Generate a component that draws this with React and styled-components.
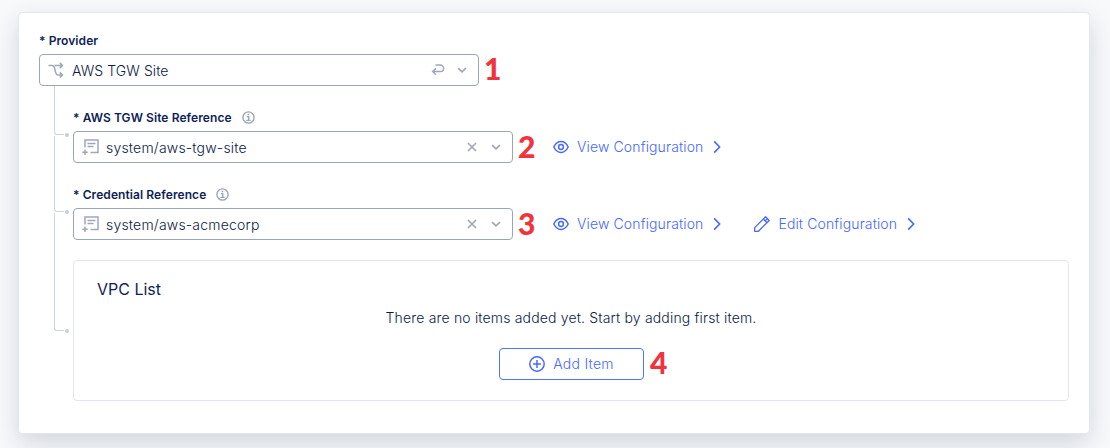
import React from "react";
import styled, { createGlobalStyle } from "styled-components";

const Global = createGlobalStyle`
  *, *::before, *::after { box-sizing: border-box; }
  body {
    margin: 0;
    background: #f8f9fb;
    font-family: Inter, "Liberation Sans", sans-serif;
    color: #0f1e57;
  }
  svg { display: block; flex: none; }
`;

const Page = styled.div`
  height: 448px;
  padding: 12px 20px 0 18px;
  overflow: hidden;
`;

const Card = styled.main`
  width: 1072px;
  height: 422px;
  padding: 19px 20px 20px;
  background: #fff;
  border: 1px solid #e4e7f2;
  border-radius: 4px;
  box-shadow: 0 9px 24px rgba(15, 30, 70, 0.16);
`;

const Label = styled.div`
  display: flex;
  align-items: center;
  gap: 10px;
  height: 16px;
  font-size: 12px;
  font-weight: 600;
  letter-spacing: 0.08px;
  white-space: nowrap;
`;

const FieldLine = styled.div`
  display: flex;
  align-items: center;
  height: 32px;
  margin-top: 6px;
`;

const SelectBox = styled.div`
  display: flex;
  align-items: center;
  flex: none;
  width: 440px;
  height: 32px;
  padding: 0 10px 0 8px;
  border: 1px solid #9ca5b8;
  border-radius: 4px;
  color: #a0a7ba;
`;

const SelectValue = styled.span`
  flex: 1;
  margin-left: ${(p) => p.$gap};
  padding-top: 2px;
  font-size: 14px;
  font-weight: 350;
  line-height: 20px;
  letter-spacing: ${(p) => p.$spacing || "0"};
  color: #0c1a47;
`;

const SelectTools = styled.span`
  display: flex;
  align-items: center;
  gap: ${(p) => p.$gap || "12px"};
`;

const StepNumber = styled.span`
  flex: none;
  width: 17px;
  margin: 0 ${(p) => p.$shift ? `-${p.$shift}` : "0"} ${(p) => p.$lift || "2px"} calc(5px + ${(p) => p.$shift || "0px"});
  font: 900 30px/32px Lato, "Open Sans", sans-serif;
  color: #f2323c;
`;

const Action = styled.a`
  display: flex;
  align-items: center;
  margin-left: ${(p) => p.$offset};
  font-size: 14px;
  font-weight: 350;
  line-height: 20px;
  letter-spacing: 0.13px;
  color: #4768ff;
  white-space: nowrap;
  span { margin: 0 8px; }
`;

const TreeRow = styled.div`
  display: grid;
  grid-template-columns: 34px 1fr;
  height: ${(p) => p.$height};
`;

const Branch = styled.div`
  display: flex;
  flex-direction: column;
  padding-left: 15px;
`;

const Elbow = styled.div`
  display: flex;
  align-items: flex-end;
  height: ${(p) => p.$height};
  &::before {
    content: "";
    width: 10px;
    height: 100%;
    border: solid #cdd3e2;
    border-width: 0 0 1px 1px;
    border-bottom-left-radius: 3px;
  }
  &::after {
    content: "";
    width: 4px;
    height: 4px;
    margin: 0 0 -2px 1px;
    border-radius: 50%;
    background: #c6cddd;
  }
`;

const Stem = styled.div`
  flex: 1;
  width: 1px;
  margin-top: 1px;
  background: #cdd3e2;
`;

const Field = styled.div`
  padding-top: 23px;
`;

const ListPanel = styled.section`
  display: flex;
  flex-direction: column;
  height: 141px;
  margin-top: 20px;
  border: 1px solid #e4e4f1;
  border-radius: 4px;
`;

const PanelTitle = styled.h2`
  margin: 16px 0 0 23px;
  font-size: 16px;
  font-weight: 400;
  line-height: 24px;
`;

const EmptyText = styled.p`
  margin: 7px 0 0;
  font-size: 14px;
  font-weight: 350;
  line-height: 20px;
  letter-spacing: 0.17px;
  text-align: center;
  color: #0c1a47;
`;

const AddLine = styled.div`
  display: flex;
  align-items: center;
  height: 32px;
  margin: 20px 0 0 425px;
`;

const AddButton = styled.button`
  display: flex;
  align-items: center;
  justify-content: center;
  gap: 8px;
  width: 145px;
  height: 32px;
  padding: 0;
  border: 1px solid #4f73ff;
  border-radius: 4px;
  background: #fff;
  font: 350 14px/20px Inter, sans-serif;
  letter-spacing: 0.25px;
  color: #4768ff;
`;

const stroke = { fill: "none", stroke: "currentColor", strokeWidth: 1.5 };

const BranchIcon = () => (
  <svg width="16" height="16" viewBox="0 0 16 16" {...stroke}>
    <path d="M.5 3.500h3.500C8.500 3.500 5.900 13 10 13h4.200M6.500 3.500h7.700M11.800.9l2.600 2.600-2.600 2.600M11.800 10.400l2.600 2.600-2.600 2.600" />
  </svg>
);

const ReferenceIcon = () => (
  <svg width="18" height="18" viewBox="0 0 18 18" {...stroke}>
    <path d="M3 9.500V2h13v12.500H8.500M5.500 5.500h8M5.500 8.500h6M3 11.500v5.500M.3 14.300h5.400" />
  </svg>
);

const InfoIcon = () => (
  <svg width="13" height="13" viewBox="0 0 13 13" fill="none" stroke="#9da5b8" strokeWidth="1.4">
    <circle cx="6.5" cy="6.5" r="5.600" />
    <path d="M4.800 5.600h1.900v3.700M4.400 9.400h4.200M5.600 3.500h1.700" />
  </svg>
);

const ReturnIcon = () => (
  <svg width="14" height="12" viewBox="0 0 14 12" {...stroke}>
    <path d="M4.500 1H9.300a3.300 3.300 0 0 1 0 6.600H2M4.900 4.400l-3.200 3.200 3.200 3.200" />
  </svg>
);

const ChevronDown = () => (
  <svg width="12" height="12" viewBox="0 0 12 12" {...stroke} strokeWidth="1.7">
    <path d="M2.100 4.100 6 7.900l3.900-3.800" />
  </svg>
);

const ClearIcon = () => (
  <svg width="12" height="12" viewBox="0 0 12 12" {...stroke} strokeWidth="1.7">
    <path d="m2 2 8 8M10 2l-8 8" />
  </svg>
);

const EyeIcon = () => (
  <svg width="16" height="16" viewBox="0 0 16 16" {...stroke}>
    <path d="M.8 8C2.500 4.600 5 2.600 8 2.600S13.500 4.600 15.200 8C13.500 11.400 11 13.400 8 13.400S2.500 11.400.8 8Z" />
    <circle cx="8" cy="8" r="2.400" />
  </svg>
);

const PencilIcon = () => (
  <svg width="16" height="16" viewBox="0 0 16 16" {...stroke} strokeWidth="1.300">
    <path d="M.7 15.300V11.600L11.500.8 15.200 4.500 4.400 15.300ZM9.300 3l3.700 3.700M11.100 4.900 13.300 2.700" strokeLinejoin="round" />
  </svg>
);

const ChevronRight = () => (
  <svg width="12" height="14" viewBox="0 0 12 14" {...stroke} strokeWidth="1.600">
    <path d="m3.200 1.400 5.400 5.600-5.400 5.600" />
  </svg>
);

const PlusCircle = () => (
  <svg width="16" height="16" viewBox="0 0 16 16" {...stroke}>
    <circle cx="8" cy="8" r="7.200" />
    <path d="M8 4v8M4 8h8" />
  </svg>
);

const LinkAction = ({ icon, children, offset }) => (
  <Action $offset={offset}>
    {icon}
    <span>{children}</span>
    <ChevronRight />
  </Action>
);

const ReferenceField = ({ label, value, step, children }) => (
  <TreeRow $height="77px">
    <Branch>
      <Elbow $height="49px" />
      <Stem />
    </Branch>
    <Field>
      <Label>
        <span>* {label}</span>
        <InfoIcon />
      </Label>
      <FieldLine>
        <SelectBox>
          <ReferenceIcon />
          <SelectValue $gap="6px" $spacing="0.2px">{value}</SelectValue>
          <SelectTools>
            <ClearIcon />
            <ChevronDown />
          </SelectTools>
        </SelectBox>
        <StepNumber>{step}</StepNumber>
        {children}
      </FieldLine>
    </Field>
  </TreeRow>
);

export default function App() {
  return (
    <>
      <Global />
      <Page>
        <Card>
          <Label>* Provider</Label>
          <FieldLine>
            <SelectBox>
              <BranchIcon />
              <SelectValue $gap="8px" $spacing="0.08px">AWS TGW Site</SelectValue>
              <SelectTools $gap="11px">
                <ReturnIcon />
                <ChevronDown />
              </SelectTools>
            </SelectBox>
            <StepNumber $lift="4px">1</StepNumber>
          </FieldLine>
          <ReferenceField label="AWS TGW Site Reference" value="system/aws-tgw-site" step="2">
            <LinkAction icon={<EyeIcon />} offset="18px">View Configuration</LinkAction>
          </ReferenceField>
          <ReferenceField label="Credential Reference" value="system/aws-acmecorp" step="3">
            <LinkAction icon={<EyeIcon />} offset="18px">View Configuration</LinkAction>
            <LinkAction icon={<PencilIcon />} offset="31px">Edit Configuration</LinkAction>
          </ReferenceField>
          <TreeRow $height="161px">
            <Branch>
              <Elbow $height="91px" />
            </Branch>
            <ListPanel>
              <PanelTitle>VPC List</PanelTitle>
              <EmptyText>There are no items added yet. Start by adding first item.</EmptyText>
              <AddLine>
                <AddButton>
                  <PlusCircle />
                  Add Item
                </AddButton>
                <StepNumber $lift="4px" $shift="1px">4</StepNumber>
              </AddLine>
            </ListPanel>
          </TreeRow>
        </Card>
      </Page>
    </>
  );
}
